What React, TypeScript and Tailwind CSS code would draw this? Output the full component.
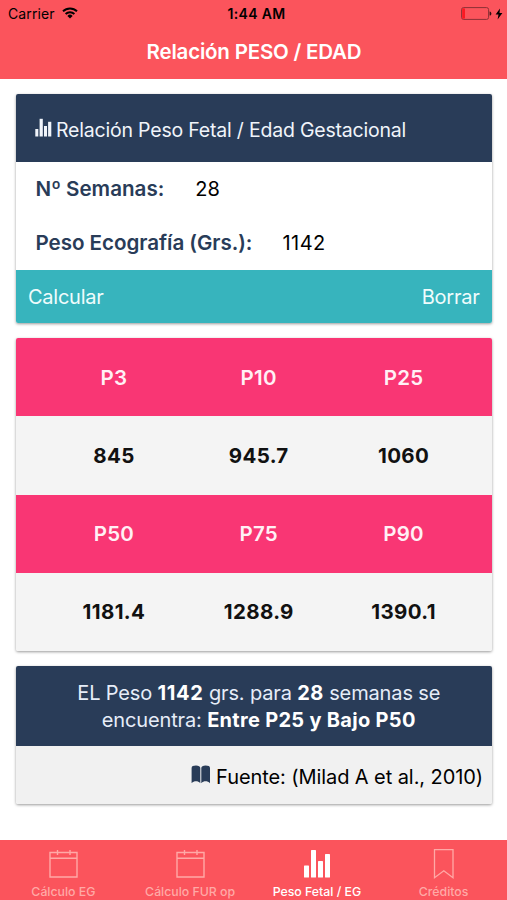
const percentiles = [
  {
    labels: ["P3", "P10", "P25"],
    values: ["845", "945.7", "1060"],
  },
  {
    labels: ["P50", "P75", "P90"],
    values: ["1181.4", "1288.9", "1390.1"],
  },
];

const tabs = [
  { label: "Cálculo EG", icon: CalendarIcon, active: false },
  { label: "Cálculo FUR op", icon: CalendarIcon, active: false },
  { label: "Peso Fetal / EG", icon: BarsIcon, active: true },
  { label: "Créditos", icon: BookmarkIcon, active: false },
];

function CalendarIcon() {
  return (
    <svg width="30" height="30" viewBox="0 0 30 30" fill="none" stroke="currentColor" strokeWidth="1.4">
      <path d="M2 3.5h27v24.5h-27zM2 9.3h27M9.5 1v5M22 1v5" />
    </svg>
  );
}

function BarsIcon() {
  return (
    <svg width="30" height="30" viewBox="0 0 30 30" fill="currentColor">
      <rect x="2" y="16.5" width="5" height="12" rx="0.6" />
      <rect x="9" y="1" width="5" height="27.5" rx="0.6" />
      <rect x="16" y="12" width="5" height="16.5" rx="0.6" />
      <rect x="23" y="5" width="5" height="23.5" rx="0.6" />
    </svg>
  );
}

function BookmarkIcon() {
  return (
    <svg width="30" height="30" viewBox="0 0 30 30" fill="none" stroke="currentColor" strokeWidth="1.3">
      <path d="M5.5 0.7h18.5v28L14.8 21.8 5.5 28.7z" />
    </svg>
  );
}

function StatusBar() {
  return (
    <div className="grid h-7 grid-cols-3 items-center pl-2 pr-1 text-black">
      <div className="flex items-center gap-[7px]">
        <span className="text-[14px] tracking-[0.1px]">Carrier</span>
        <svg width="16" height="12" viewBox="0 0 16 12" fill="none" stroke="currentColor" strokeWidth="1.9" className="-mt-0.5">
          <path d="M1 4.3a10 10 0 0 1 14 0M3.6 7a6.3 6.3 0 0 1 8.8 0" />
          <path d="M8 11.5 5.4 8.9a3.7 3.7 0 0 1 5.2 0z" fill="currentColor" stroke="none" />
        </svg>
      </div>
      <span className="pl-[2px] text-center text-[14px] font-semibold tracking-[0.3px]">1:44 AM</span>
      <div className="flex items-center justify-end gap-[3px] pb-px">
        <svg width="31" height="13" viewBox="0 0 31 13">
          <rect x="0.6" y="0.6" width="27" height="11.8" rx="2" fill="none" stroke="#8c3036" strokeWidth="1" />
          <rect x="1.2" y="1.2" width="2.8" height="10.6" rx="1" fill="#fc1822" />
          <path d="M28.6 4.4c2.4.4 2.4 3.8 0 4.2z" fill="#2b1012" />
        </svg>
        <svg width="8" height="12" viewBox="0 0 8 12" fill="currentColor">
          <path d="M5 .5.6 6.6h2.9L2.6 11.5 7.4 5H4.5z" />
        </svg>
      </div>
    </div>
  );
}

export default function App() {
  return (
    <div className="flex h-[900px] w-[507px] flex-col overflow-hidden bg-white font-[Inter,sans-serif] text-xl">
      <header className="h-[79px] shrink-0 bg-[#fb545c]">
        <StatusBar />
        <h1 className="pt-[9px] pl-px text-center text-[20.5px] leading-[30px] font-semibold tracking-[-0.2px] text-white">
          Relación PESO / EDAD
        </h1>
      </header>

      <main className="flex flex-1 flex-col gap-[15px] pt-[15px] pr-[15px] pl-[15.5px]">
        <section className="overflow-hidden rounded-xs shadow-[0_1px_3px_rgba(0,0,0,0.4)]">
          <div className="flex h-[68px] items-center gap-[4.5px] bg-[#293c58] pt-[5px] pl-[19px] text-[#f0f4fa]">
            <svg width="17" height="19" viewBox="0 0 17 19" fill="currentColor" className="-mt-1.5">
              <rect x="0.3" y="11" width="3" height="7.5" />
              <rect x="4.6" y="0.8" width="3.2" height="17.7" />
              <rect x="9" y="8" width="3" height="10.5" />
              <rect x="13.1" y="3.8" width="3.2" height="14.7" />
            </svg>
            <span className="text-[19.5px] tracking-[-0.2px]">Relación Peso Fetal / Edad Gestacional</span>
          </div>
          <div className="flex h-[54px] items-center pl-5">
            <label className="text-[20.6px] font-semibold text-[#293c58]">Nº Semanas:</label>
            <span className="ml-[31px]">28</span>
          </div>
          <div className="flex h-[54px] items-center pl-5">
            <label className="text-[20.6px] font-semibold tracking-[-0.05px] text-[#293c58]">Peso Ecografía (Grs.):</label>
            <span className="ml-[30px] tracking-[0.5px]">1142</span>
          </div>
          <div className="flex h-[53px] items-center justify-between bg-[#37b4bd] pr-[12.5px] pl-[12.5px] tracking-[-0.25px] text-[#effcfc]">
            <button type="button">Calcular</button>
            <button type="button">Borrar</button>
          </div>
        </section>

        <section className="overflow-hidden rounded-xs text-center text-[20.5px] shadow-[0_1px_3px_rgba(0,0,0,0.4)]">
          {percentiles.map((p) => (
            <div key={p.labels[0]}>
              <div className="grid h-[78px] grid-cols-3 items-center bg-[#f93674] pt-0.5 pr-4 pl-[26px] font-semibold tracking-[0.3px] text-[#fff0f5]">
                {p.labels.map((l) => (
                  <span key={l}>{l}</span>
                ))}
              </div>
              <div className="grid h-[78.5px] grid-cols-3 items-center bg-[#f4f4f4] pt-0.5 pr-4 pl-[26px] font-bold tracking-[0.35px] text-[#111]">
                {p.values.map((v) => (
                  <span key={v}>{v}</span>
                ))}
              </div>
            </div>
          ))}
        </section>

        <section className="overflow-hidden rounded-xs shadow-[0_1px_3px_rgba(0,0,0,0.4)]">
          <div className="h-20 bg-[#293c58] pt-[13.5px] pl-[10px] text-center leading-[27px] tracking-[-0.14px] text-[#e6edf8]">
            <p>
              EL Peso <b className="font-bold tracking-[0.6px] text-white">1142</b> grs. para{" "}
              <b className="font-bold tracking-[0.4px] text-white">28</b> semanas se
            </p>
            <p>
              encuentra: <b className="font-bold tracking-[0.3px] text-white">Entre P25 y Bajo P50</b>
            </p>
          </div>
          <div className="flex h-[58px] items-center justify-end gap-[5px] bg-[#f1f1f1] pt-1 pr-[9px]">
            <svg width="20" height="19" viewBox="0 0 20 19" fill="#293c58" className="-mt-1.5">
              <path d="M.6 3C.6 1.4 2.4.6 5 .6s4.3.9 4.3 2.4v15.2C8 16.7 6.6 16.2 5 16.2S1.9 16.7.6 18.2zM10.3 3C10.3 1.5 12 .6 14.6.6S19 1.4 19 3v15.2c-1.3-1.5-2.8-2-4.4-2s-3 .5-4.3 2z" />
            </svg>
            <span className="tracking-[-0.08px]">Fuente: (Milad A et al., 2010)</span>
          </div>
        </section>
      </main>

      <nav className="grid h-[60px] shrink-0 grid-cols-4 bg-[#fb545c]">
        {tabs.map(({ label, icon: Icon, active }) => (
          <a
            key={label}
            className={`flex flex-col items-center pt-[9px] ${active ? "text-white" : "text-[#ffa9a6]"}`}
          >
            <Icon />
            <span className="mt-[5px] text-[12.3px] leading-4 font-medium whitespace-nowrap">{label}</span>
          </a>
        ))}
      </nav>
    </div>
  );
}
